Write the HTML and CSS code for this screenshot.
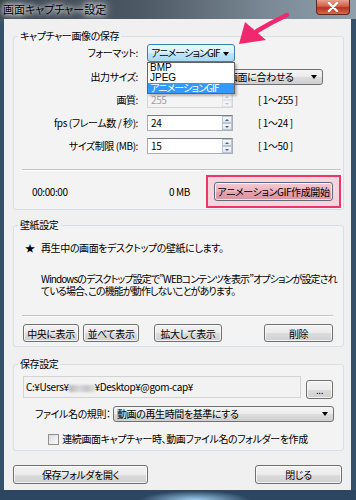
FILE: index.html
```html
<!DOCTYPE html>
<html lang="ja">
<head>
    <meta charset="UTF-8">
    <title>画面キャプチャー設定</title>
    <link rel="stylesheet" href="styles.css">
</head>
<body>
    <div class="window">
        <div class="titlebar">
            <span class="title">画面キャプチャー設定</span>
            <div class="close-btn">
                <svg width="12" height="10" viewBox="0 0 12 10"><path d="M2 1 L10 9 M10 1 L2 9" stroke="#fff" stroke-width="2.4" stroke-linecap="round"/></svg>
            </div>
        </div>

        <div class="client">
            <fieldset class="group group-capture">
                <legend>キャプチャー画像の保存</legend>
                <div class="form-grid">
                    <label>フォーマット:</label>
                    <div class="combo-cell">
                        <div class="combo combo-focus">アニメーションGIF<span class="combo-arrow"></span></div>
                        <ul class="dropdown-list">
                            <li>BMP</li>
                            <li>JPEG</li>
                            <li class="selected">アニメーションGIF</li>
                        </ul>
                    </div>
                    <span></span>

                    <label>出力サイズ:</label>
                    <div class="combo combo-size">画面に合わせる<span class="combo-arrow"></span></div>

                    <label>画質:</label>
                    <div class="spin spin-disabled">
                        <span class="spin-value">255</span>
                        <span class="spin-buttons"><i class="up"></i><i class="down"></i></span>
                    </div>
                    <span class="range">[ 1〜255 ]</span>

                    <label>fps (フレーム数 / 秒):</label>
                    <div class="spin">
                        <span class="spin-value">24</span>
                        <span class="spin-buttons"><i class="up"></i><i class="down"></i></span>
                    </div>
                    <span class="range">[ 1〜24 ]</span>

                    <label>サイズ制限 (MB):</label>
                    <div class="spin">
                        <span class="spin-value">15</span>
                        <span class="spin-buttons"><i class="up"></i><i class="down"></i></span>
                    </div>
                    <span class="range">[ 1〜50 ]</span>
                </div>

                <div class="separator"></div>

                <div class="status-row">
                    <span class="time">00:00:00</span>
                    <span class="filesize">0 MB</span>
                    <div class="highlight">
                        <button class="btn btn-gif">アニメーションGIF作成開始</button>
                    </div>
                </div>
            </fieldset>

            <fieldset class="group group-wallpaper">
                <legend>壁紙設定</legend>
                <p class="wall-lead"><span class="star">★</span>再生中の画面をデスクトップの壁紙にします。</p>
                <p class="wall-note">Windowsのデスクトップ設定で”WEBコンテンツを表示”オプションが設定され<br>ている場合、この機能が動作しないことがあります。</p>
                <div class="separator"></div>
                <div class="wall-buttons">
                    <button class="btn btn-center">中央に表示</button>
                    <button class="btn btn-tile">並べて表示</button>
                    <button class="btn btn-stretch">拡大して表示</button>
                    <button class="btn btn-delete">削除</button>
                </div>
            </fieldset>

            <fieldset class="group group-save">
                <legend>保存設定</legend>
                <div class="path-row">
                    <div class="path-box">C:¥Users¥<span class="blurred"></span>¥Desktop¥@gom-cap¥</div>
                    <button class="btn btn-browse">...</button>
                </div>
                <div class="rule-row">
                    <label>ファイル名の規則：</label>
                    <div class="combo combo-rule">動画の再生時間を基準にする<span class="combo-arrow"></span></div>
                </div>
                <div class="check-row">
                    <span class="checkbox"></span>
                    <span>連続画面キャプチャー時、動画ファイル名のフォルダーを作成</span>
                </div>
            </fieldset>

            <div class="dialog-buttons">
                <button class="btn btn-open">保存フォルダを開く</button>
                <button class="btn btn-close">閉じる</button>
            </div>
        </div>

        <div class="bottom-frame"></div>

        <!-- 注釈の矢印 -->
        <svg class="pointer" width="70" height="45" viewBox="0 0 70 45">
            <path d="M57 7 Q42 14 27 23" stroke="#f0286e" stroke-width="4.5" fill="none" stroke-linecap="round"/>
            <polygon points="9,36 15,14 36,32" fill="#f0286e"/>
        </svg>
    </div>
</body>
</html>
```

FILE: styles.css
```css
body {
    margin: 0;
    font-family: "Liberation Sans Narrow", "Noto Sans CJK JP", sans-serif;
    font-size: 10px;
    font-feature-settings: "palt";
    letter-spacing: -0.4px;
    color: #000;
}
.window {
    position: relative;
    width: 356px;
    height: 500px;
    background: #35506a;
    display: flex;
    flex-direction: column;
    overflow: hidden;
}
.titlebar {
    height: 19px;
    flex: none;
    display: flex;
    background: linear-gradient(to right, #323d48, #4d5964 40%, #7a8995 75%, #90a0ac);
}
.title {
    padding-left: 3px;
    line-height: 18px;
    font-size: 11px;
    letter-spacing: 0;
    text-shadow: 0 0 4px #fff, 0 0 8px #fff, 0 0 12px rgba(255, 255, 255, 0.9);
}
.close-btn {
    margin-left: auto;
    margin-right: 6px;
    width: 34px;
    height: 15px;
    box-sizing: border-box;
    border: 1px solid #5a2a22;
    border-top: none;
    border-radius: 0 0 4px 4px;
    background: linear-gradient(#e9a08e, #d0604a 45%, #b8321e 55%, #d66a4a);
    display: flex;
    align-items: center;
    justify-content: center;
}
.client {
    height: 471px;
    flex: none;
    box-sizing: border-box;
    margin: 0 5px 0 4px;
    padding: 10px 7px 0 9px;
    background: #f0f0f0;
}
.group {
    margin: 0;
    min-width: 0;
    border: 1px solid #d5dfe5;
    border-radius: 3px;
    background: #f3f3f3;
}
.group legend {
    margin-left: -4px;
    padding: 0 2px;
    line-height: 14px;
}
.group-capture {
    padding: 1px 2px 1px 8px;
}
.group-wallpaper {
    margin-top: 8px;
    padding: 10px 10px 4px 8px;
}
.group-save {
    margin-top: 10px;
    padding: 5px 9px 5px 8px;
}
.form-grid {
    display: grid;
    grid-template-columns: 116px 88px 1fr;
    column-gap: 9px;
    row-gap: 7px;
    align-items: center;
}
.form-grid label {
    text-align: right;
    line-height: 12px;
    white-space: nowrap;
}
.combo-cell {
    position: relative;
    z-index: 2;
}
.combo {
    position: relative;
    box-sizing: border-box;
    height: 16px;
    line-height: 14px;
    padding-left: 3px;
    border: 1px solid #707070;
    border-radius: 3px;
    background: linear-gradient(#f4f4f4, #ebebeb 50%, #dddddd 51%, #cfcfcf);
    white-space: nowrap;
    overflow: hidden;
}
.combo-arrow {
    position: absolute;
    right: 5px;
    top: 5px;
    border-left: 3.5px solid transparent;
    border-right: 3.5px solid transparent;
    border-top: 4px solid #000;
}
.combo-focus {
    height: 18px;
    line-height: 16px;
    letter-spacing: -0.9px;
    border-color: #3c7fb1;
    background: linear-gradient(#eaf6fd, #d9f0fc 50%, #bee6fd 51%, #a7d9f5);
}
.combo-focus .combo-arrow {
    top: 7px;
}
.combo-size {
    grid-column: 2 / 4;
    margin-left: 77px;
    width: 99px;
}
.dropdown-list {
    position: absolute;
    left: 0;
    top: 100%;
    width: 88px;
    margin: 0;
    padding: 0;
    list-style: none;
    box-sizing: border-box;
    border: 1px solid #646464;
    background: #fff;
    box-shadow: 2px 2px 2px rgba(0, 0, 0, 0.25);
    font-family: "Liberation Sans", "Noto Sans CJK JP", sans-serif;
    letter-spacing: 0;
}
.dropdown-list li {
    height: 10px;
    line-height: 10px;
    padding-left: 2px;
    font-size: 10px;
}
.dropdown-list .selected {
    background: #3399ff;
    color: #fff;
    font-family: "Noto Sans CJK JP", sans-serif;
    letter-spacing: -0.9px;
}
.spin {
    display: flex;
    box-sizing: border-box;
    width: 86px;
    height: 16px;
    border: 1px solid #abadb3;
    border-top-color: #7a7d84;
    background: #fff;
}
.spin-value {
    flex: 1;
    padding-left: 3px;
    line-height: 13px;
}
.spin-buttons {
    width: 10px;
    display: flex;
    flex-direction: column;
}
.spin-buttons i {
    flex: 1;
    position: relative;
    border: 1px solid #b9c6d4;
    background: linear-gradient(#f6f9fc, #dde6ef);
}
.spin-buttons i::after {
    content: "";
    position: absolute;
    left: 2px;
    top: 2px;
    border-left: 2px solid transparent;
    border-right: 2px solid transparent;
}
.spin-buttons .up::after {
    border-bottom: 2px solid #4b6386;
}
.spin-buttons .down::after {
    border-top: 2px solid #4b6386;
}
.spin-disabled {
    background: #f4f4f4;
    border-color: #d5d5d5;
    color: #a0a0a0;
}
.spin-disabled .spin-buttons i {
    border-color: #dfe3e8;
    background: #f2f4f6;
}
.spin-disabled .spin-buttons i::after {
    opacity: 0.35;
}
.range {
    margin-left: 14px;
    line-height: 12px;
    white-space: nowrap;
}
.separator {
    height: 0;
    border-top: 1px solid #c3c3c3;
    border-bottom: 1px solid #fff;
}
.group-capture .separator {
    margin-top: 15px;
}
.status-row {
    display: flex;
    align-items: center;
    margin-top: 4px;
}
.time {
    margin-left: 10px;
}
.filesize {
    flex: 1;
    text-align: right;
    margin-right: 16px;
}
.highlight {
    width: 135px;
    box-sizing: border-box;
    padding: 5px 6px;
    border: 2px solid #e8386b;
    background: #f7d3dc;
}
.btn {
    display: block;
    box-sizing: border-box;
    height: 18px;
    padding: 0;
    font-family: inherit;
    font-size: 10px;
    font-feature-settings: "palt";
    letter-spacing: -0.4px;
    white-space: nowrap;
    color: #000;
    border: 1px solid #707070;
    border-radius: 3px;
    background: linear-gradient(#f2f2f2, #ebebeb 50%, #dddddd 51%, #cfcfcf);
    box-shadow: inset 0 0 0 1px rgba(255, 255, 255, 0.7);
}
.btn-gif {
    width: 100%;
    height: 19px;
    border-color: #5d6a80;
    background: linear-gradient(#f3cbd2, #eab1bc 50%, #e3a0ad 51%, #dc95a3);
}
.wall-lead {
    margin: 0;
    line-height: 12px;
}
.star {
    display: inline-block;
    width: 19px;
    padding-left: 3px;
    box-sizing: border-box;
}
.wall-note {
    margin: 19px 0 0;
    padding-left: 19px;
    line-height: 12px;
    letter-spacing: -0.9px;
    white-space: nowrap;
}
.group-wallpaper .separator {
    margin-top: 18px;
}
.wall-buttons {
    display: flex;
    gap: 4px;
    margin-top: 7px;
    padding-left: 1px;
}
.btn-center, .btn-tile {
    width: 56px;
}
.btn-stretch {
    width: 68px;
    margin-left: 11px;
}
.btn-delete {
    width: 69px;
    margin-left: auto;
}
.path-row {
    display: flex;
    align-items: flex-end;
}
.path-box {
    width: 278px;
    height: 22px;
    margin-left: 1px;
    box-sizing: border-box;
    padding-left: 2px;
    line-height: 20px;
    border: 1px solid #d3d3d3;
    background: #f2f2f2;
    white-space: nowrap;
}
.blurred {
    display: inline-block;
    width: 26px;
    height: 7px;
    vertical-align: -1px;
    background: linear-gradient(to right, #b8b8b8, #d8d8d8 40%, #c6c6c6 70%, #dedede);
    filter: blur(1px);
}
.btn-browse {
    width: 27px;
    height: 19px;
    margin-left: 5px;
    margin-bottom: -1px;
}
.rule-row {
    display: flex;
    align-items: center;
    margin-top: 8px;
    padding-left: 13px;
}
.rule-row label {
    width: 78px;
    line-height: 12px;
    white-space: nowrap;
}
.combo-rule {
    flex: 1;
}
.check-row {
    display: flex;
    align-items: center;
    justify-content: center;
    gap: 3px;
    margin-top: 11px;
    line-height: 12px;
}
.checkbox {
    width: 11px;
    height: 11px;
    box-sizing: border-box;
    border: 1px solid #8f8f8f;
    background: linear-gradient(135deg, #dcdcdc, #fbfbfb);
}
.dialog-buttons {
    display: flex;
    justify-content: space-between;
    margin-top: 14px;
    padding-right: 2px;
}
.dialog-buttons .btn {
    height: 19px;
}
.btn-open {
    width: 135px;
}
.btn-close {
    width: 87px;
}
.bottom-frame {
    flex: 1;
    background: radial-gradient(ellipse 55px 9px at 195px 100%, #9fd0f0, rgba(159, 208, 240, 0)), #2c4560;
}
.pointer {
    position: absolute;
    left: 230px;
    top: 8px;
    z-index: 3;
}
```
